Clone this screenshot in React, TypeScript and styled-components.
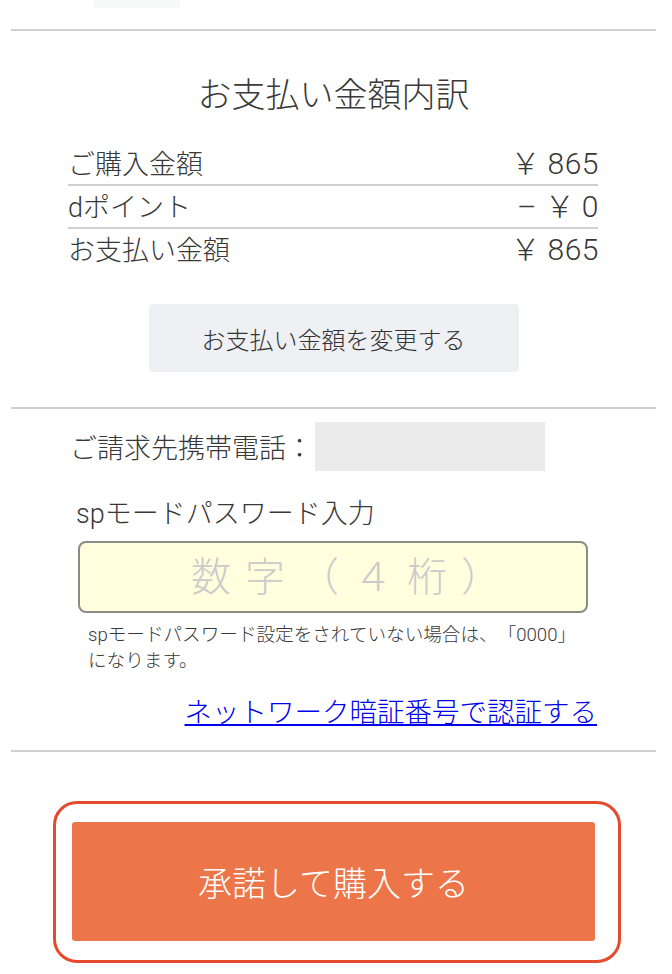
import styled, { createGlobalStyle } from 'styled-components';

const GlobalStyle = createGlobalStyle`
  body {
    margin: 0;
    background: #fff;
    color: #383838;
    font-family: Roboto, "Noto Sans CJK JP", sans-serif;
    font-weight: 300;
    text-spacing-trim: space-all;
  }
`;

const Page = styled.div`
  padding: 0 16px 40px 11px;
`;

const TopStub = styled.div`
  width: 86px;
  height: 8px;
  margin-left: 83px;
  background: #f7f9f9;
`;

const Divider = styled.hr<{ $top: number }>`
  border: 0;
  height: 2px;
  margin: ${p => p.$top}px 0 0;
  background: #cfcfcf;
`;

const Title = styled.h2`
  margin: 44px 0 0;
  font-size: 34px;
  line-height: 40px;
  font-weight: 300;
  text-align: center;
  color: #3a3a3a;
`;

const Breakdown = styled.div`
  margin: 28px 58px 0 57px;
`;

const Row = styled.div`
  display: flex;
  justify-content: space-between;
  align-items: baseline;
  height: 41px;
  font-size: 27px;
  line-height: 41px;
  border-bottom: 2px solid #cfcfcf;

  &:last-child {
    border-bottom: 0;
  }
`;

const Amount = styled.span`
  font-size: 30px;
  letter-spacing: 0.5px;
  margin-right: -1px;
`;

const ButtonWrap = styled.div`
  display: flex;
  justify-content: center;
  margin-top: 34px;
`;

const ChangeButton = styled.button`
  width: 370px;
  height: 68px;
  border: 0;
  border-radius: 4px;
  background: #eef0f4;
  color: #333;
  font-family: inherit;
  font-weight: inherit;
  font-size: 24px;
`;

const BillingRow = styled.div`
  display: flex;
  align-items: center;
  margin-top: 13px;
  padding-left: 59px;
  font-size: 27px;
`;

const PhoneMask = styled.div`
  width: 230px;
  height: 49px;
  margin-left: 2px;
  background: #ebebeb;
`;

const Label = styled.div`
  margin-top: 28px;
  padding-left: 65px;
  font-size: 27px;
  line-height: 30px;
`;

const PasswordInput = styled.input`
  display: block;
  box-sizing: border-box;
  width: 510px;
  height: 72px;
  margin: 12px 0 0 67px;
  padding: 0 0 0 40px;
  border: 2px solid #8c8c84;
  border-radius: 8px;
  background: #ffffdd;
  font-family: inherit;
  font-weight: inherit;
  font-size: 40px;
  letter-spacing: 14px;
  text-align: center;
  outline: none;

  &::placeholder {
    color: #cbcbcb;
  }
`;

const Note = styled.p`
  margin: 9px 0 0;
  padding-left: 77px;
  font-size: 18.6px;
  line-height: 26px;
`;

const LinkRow = styled.div`
  margin-top: 23px;
  padding-right: 59px;
  text-align: right;
  font-size: 27.5px;
  line-height: 32px;

  a {
    color: #0000ee;
    text-decoration: underline;
  }
`;

const PurchaseFrame = styled.div`
  box-sizing: border-box;
  width: 568px;
  margin: 49px 0 0 42px;
  padding: 18px 23px 19px 16px;
  border: 3px solid #e64a2e;
  border-radius: 24px;
`;

const PurchaseButton = styled.button`
  display: block;
  width: 100%;
  height: 119px;
  border: 0;
  border-radius: 3px;
  background: #ec7549;
  color: #fff;
  font-family: inherit;
  font-weight: inherit;
  font-size: 34px;
`;

const rows = [
  { label: 'ご購入金額', value: '￥\u2009865' },
  { label: 'dポイント', value: '– ￥\u20090' },
  { label: 'お支払い金額', value: '￥\u2009865' },
];

export default function App() {
  return (
    <>
      <GlobalStyle />
      <Page>
        <TopStub />
        <Divider $top={21} />
        <Title>お支払い金額内訳</Title>
        <Breakdown>
          {rows.map(r => (
            <Row key={r.label}>
              <span>{r.label}</span>
              <Amount>{r.value}</Amount>
            </Row>
          ))}
        </Breakdown>
        <ButtonWrap>
          <ChangeButton>お支払い金額を変更する</ChangeButton>
        </ButtonWrap>
        <Divider $top={35} />
        <BillingRow>
          <span>ご請求先携帯電話：</span>
          <PhoneMask />
        </BillingRow>
        <Label>spモードパスワード入力</Label>
        <PasswordInput type="tel" placeholder="数字（４桁）" />
        <Note>
          spモードパスワード設定をされていない場合は、「0000」
          <br />
          になります。
        </Note>
        <LinkRow>
          <a href="#">ネットワーク暗証番号で認証する</a>
        </LinkRow>
        <Divider $top={21} />
        <PurchaseFrame>
          <PurchaseButton>承諾して購入する</PurchaseButton>
        </PurchaseFrame>
      </Page>
    </>
  );
}
